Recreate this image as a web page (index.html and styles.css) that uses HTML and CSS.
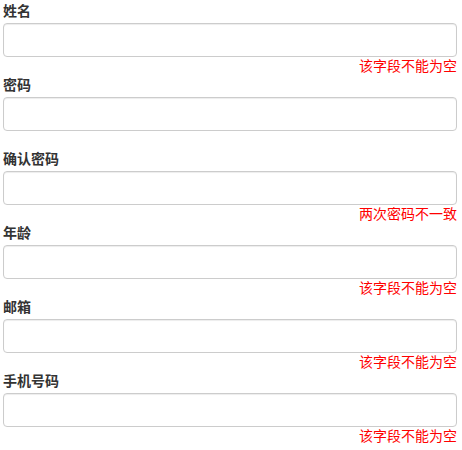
FILE: index.html
```html
<!DOCTYPE html>
<html lang="zh">
<head>
<meta charset="utf-8">
<link rel="stylesheet" href="styles.css">
</head>
<body>
<form class="form">
  <div class="field">
    <label class="label">姓名</label>
    <input class="input" type="text">
    <div class="error">该字段不能为空</div>
  </div>
  <div class="field">
    <label class="label">密码</label>
    <input class="input" type="password">
    <div class="error"></div>
  </div>
  <div class="field">
    <label class="label">确认密码</label>
    <input class="input" type="password">
    <div class="error">两次密码不一致</div>
  </div>
  <div class="field">
    <label class="label">年龄</label>
    <input class="input" type="text">
    <div class="error">该字段不能为空</div>
  </div>
  <div class="field">
    <label class="label">邮箱</label>
    <input class="input" type="text">
    <div class="error">该字段不能为空</div>
  </div>
  <div class="field">
    <label class="label">手机号码</label>
    <input class="input" type="text">
    <div class="error">该字段不能为空</div>
  </div>
</form>
</body>
</html>
```
FILE: styles.css
```css
html, body {
  margin: 0;
  padding: 0;
  background: #fff;
}
body {
  font-family: "Noto Sans CJK SC", "Noto Sans", sans-serif;
  font-size: 14px;
  color: #333;
}
.form {
  display: flex;
  flex-direction: column;
  padding: 0 5px 0 3px;
}
.field {
  display: flex;
  flex-direction: column;
  height: 74px;
}
.label {
  display: block;
  font-weight: bold;
  line-height: normal;
  height: 20px;
  margin-bottom: 3px;
  color: #333;
}
.input {
  box-sizing: border-box;
  width: 100%;
  height: 34px;
  margin: 0;
  padding: 6px 12px;
  border: 1px solid #ccc;
  border-radius: 4px;
  box-shadow: inset 0 1px 1px rgba(0,0,0,0.075);
  background: #fff;
  font-family: inherit;
  font-size: 14px;
  outline: none;
}
.error {
  height: 17px;
  line-height: 17px;
  text-align: right;
  color: #f00;
  font-size: 14px;
}
```
